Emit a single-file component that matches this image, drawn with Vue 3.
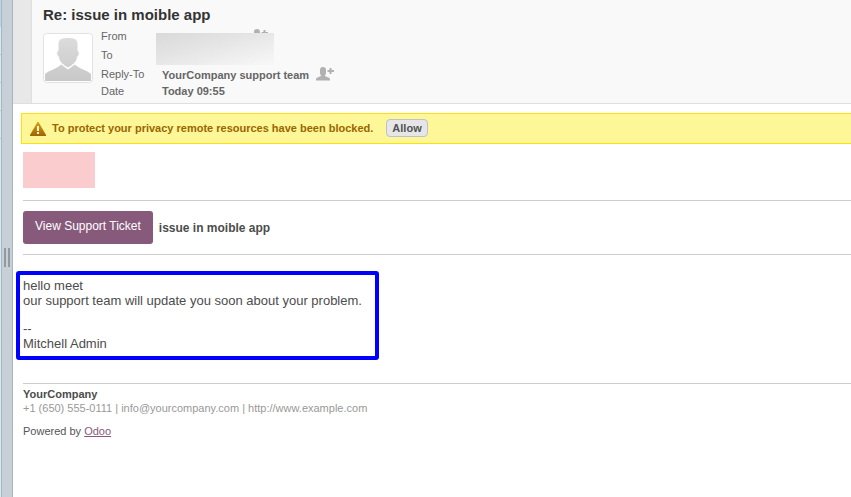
<script setup>
const mail = {
  subject: 'Re: issue in moible app',
  replyTo: 'YourCompany support team',
  date: 'Today 09:55',
}
function allowResources() {}
</script>

<template>
  <div class="shell">
    <div class="list-edge"></div>
    <div class="splitter"><span class="grip"></span></div>
    <main class="message">
      <header class="head">
        <div class="rail"></div>
        <div class="head-body">
          <h1>{{ mail.subject }}</h1>
          <div class="summary">
            <svg class="avatar" viewBox="0 0 50 50" aria-hidden="true">
              <defs>
                <linearGradient id="person" gradientUnits="userSpaceOnUse" x1="0" y1="4" x2="0" y2="48">
                  <stop offset="0" stop-color="#dcdcdc" />
                  <stop offset="1" stop-color="#c8c8c8" />
                </linearGradient>
              </defs>
              <rect x=".5" y=".5" width="49" height="49" rx="3" fill="#fff" stroke="#e2e2e2" />
              <path fill="url(#person)" d="M2 48V41C6 37 14 36 18 31.500L25 36.500L32 31.500C36 36 44 37 48 41V48Z" />
              <path fill="url(#person)" stroke="#fff" stroke-width="1" d="M15 11C15 6 19 4.500 25 4.500S35 6 35 11V18C37 18 36.500 22 34.500 24C34 29 30 32 25 35C20 32 16 29 15.500 24C13.500 22 13 18 15 18Z" />
            </svg>
            <dl class="fields">
              <dt>From</dt>
              <dd class="hidden-sender">
                <svg class="add-user" viewBox="0 0 18 14" aria-hidden="true">
                  <path d="M7 0C9 0 10 1 10 3V6C10 7.500 9 8 9 9C10 10 13.500 10 14 12V13.500H0V12C.5 10 4 10 5 9C5 8 4 7.500 4 6V3C4 1 5 0 7 0ZM13.500 1H15.500V3H18V5H15.500V7H13.500V5H11.500V3H13.500Z" />
                </svg>
                <span class="redaction"></span>
              </dd>
              <dt>To</dt>
              <dd></dd>
              <dt>Reply-To</dt>
              <dd class="reply-to">
                {{ mail.replyTo }}
                <svg class="add-user" viewBox="0 0 18 14" aria-hidden="true">
                  <path d="M7 0C9 0 10 1 10 3V6C10 7.500 9 8 9 9C10 10 13.500 10 14 12V13.500H0V12C.5 10 4 10 5 9C5 8 4 7.500 4 6V3C4 1 5 0 7 0ZM13.500 1H15.500V3H18V5H15.500V7H13.500V5H11.500V3H13.500Z" />
                </svg>
              </dd>
              <dt>Date</dt>
              <dd>{{ mail.date }}</dd>
            </dl>
          </div>
        </div>
      </header>

      <div class="notice">
        <svg class="warn" viewBox="0 0 16 15" aria-hidden="true">
          <defs>
            <linearGradient id="amber" x1="0" y1="0" x2="0" y2="1">
              <stop offset="0" stop-color="#d8a010" />
              <stop offset="1" stop-color="#a06400" />
            </linearGradient>
          </defs>
          <path fill="url(#amber)" d="M7.500 1H8.500L16 14V15H0V14Z" />
          <path fill="#fff8d8" d="M7 5H9V10H7ZM7 11H9V13H7Z" />
        </svg>
        <span>To protect your privacy remote resources have been blocked.</span>
        <button type="button" class="allow" @click="allowResources">Allow</button>
      </div>

      <article class="content">
        <div class="blocked"></div>
        <div class="ticket">
          <a class="view" href="#ticket">View Support Ticket</a>
          <strong>issue in moible app</strong>
        </div>
        <div class="reply">
          <p>hello meet<br />our support team will update you soon about your problem.</p>
          <p>--<br />Mitchell Admin</p>
        </div>
        <footer class="foot">
          <strong>YourCompany</strong>
          <p class="contact">+1 (650) 555-0111 | info@yourcompany.com | http://www.example.com</p>
          <p class="powered">Powered by <a href="#odoo">Odoo</a></p>
        </footer>
      </article>
    </main>
  </div>
</template>

<style>
body {
  margin: 0;
  background: #fff;
}
</style>

<style scoped>
* {
  box-sizing: border-box;
}
.shell {
  display: flex;
  min-height: 100vh;
  font-family: "Liberation Sans", Arial, sans-serif;
  font-size: 11px;
  color: #4c4c4c;
}
.list-edge {
  width: 1px;
  background:
    linear-gradient(#b5d8e6, #b5d8e6) 0 0 / 1px 27px no-repeat,
    repeating-linear-gradient(#d5e9f1 0 26px, #b2d2de 26px 27px, #d5e9f1 27px 28px) 0 0 / 1px 140px no-repeat,
    #d5e9f1;
}
.splitter {
  display: flex;
  align-items: center;
  justify-content: center;
  width: 12px;
  flex: none;
  padding-top: 18px;
  background: #c7d0d7;
  border-left: 1px solid #a7b8c2;
  border-right: 1px solid #a9b4bc;
}
.grip {
  width: 6px;
  height: 19px;
  border: solid #94999d;
  border-width: 0 2px;
}
.message {
  flex: 1;
  min-width: 0;
}
.head {
  display: flex;
  background: #f9f9f9;
  border-bottom: 1px solid #dfdfdf;
}
.rail {
  width: 19px;
  flex: none;
  background: #e8e8e8;
  border-right: 1px solid #dfdfdf;
}
.head-body {
  padding: 6px 11px 4px;
}
h1 {
  margin: 0 0 3px;
  font-size: 15px;
  line-height: 18px;
  color: #333;
}
.summary {
  display: flex;
  gap: 8px;
}
.avatar {
  width: 50px;
  height: 50px;
  margin-top: 6px;
}
.fields {
  display: grid;
  grid-template-columns: 55px auto;
  grid-template-rows: 18px 20px 18px 16px;
  align-items: center;
  margin: 0;
  color: #666;
}
.fields dd {
  display: flex;
  align-items: center;
  gap: 7px;
  margin: 0;
  padding-left: 6px;
  font-weight: bold;
}
.fields .reply-to {
  align-items: flex-end;
}
.add-user {
  width: 18px;
  height: 14px;
  fill: #b1b1b1;
}
.fields .hidden-sender {
  position: relative;
  padding-left: 94px;
}
.redaction {
  position: absolute;
  top: 4px;
  left: 0;
  width: 118px;
  height: 32px;
  background: linear-gradient(165deg, #d9d9d9, #e4e4e4 40%, #f8f8f8);
}
.notice {
  display: flex;
  align-items: center;
  height: 31px;
  margin: 9px 0 8px 8px;
  padding: 0 0 2px 8px;
  font-weight: bold;
  color: #960;
  background: #fdf798;
  border: 1px solid #ffdf0e;
  border-right: 0;
}
.warn {
  width: 16px;
  height: 15px;
  margin: 2px 6px 0 0;
}
.allow {
  height: 18px;
  margin-left: 13px;
  padding: 0 5px;
  font: inherit;
  color: #525252;
  background: #e6e6e8;
  border: 1px solid #c0c0c6;
  border-radius: 4px;
}
.content {
  padding-left: 10px;
}
.blocked {
  width: 72px;
  height: 36px;
  background: #facccd;
}
.ticket {
  display: flex;
  align-items: center;
  gap: 6px;
  margin-top: 12px;
  padding: 10px 0;
  border: solid #ccc;
  border-width: 1px 0;
  font-size: 12px;
}
.view {
  padding: 8px 12px 11px;
  font-size: 12px;
  line-height: 14px;
  color: #fff;
  text-decoration: none;
  background: #875a7b;
  border-radius: 3px;
}
.reply {
  width: 363px;
  max-width: 100%;
  margin: 16px 0 23px -7px;
  padding: 3px 3px 5px;
  font-size: 13px;
  line-height: 15px;
  border: 4px solid #00f;
  border-radius: 3px;
}
.reply p {
  margin: 0;
}
.reply p + p {
  margin-top: 13px;
}
.foot {
  padding-top: 3px;
  line-height: 14px;
  border-top: 1px solid #ccc;
}
.foot p {
  margin: 0;
}
.foot .contact {
  color: #999;
}
.foot .powered {
  margin-top: 9px;
  color: #555;
}
.powered a {
  color: #875a7b;
}
</style>
